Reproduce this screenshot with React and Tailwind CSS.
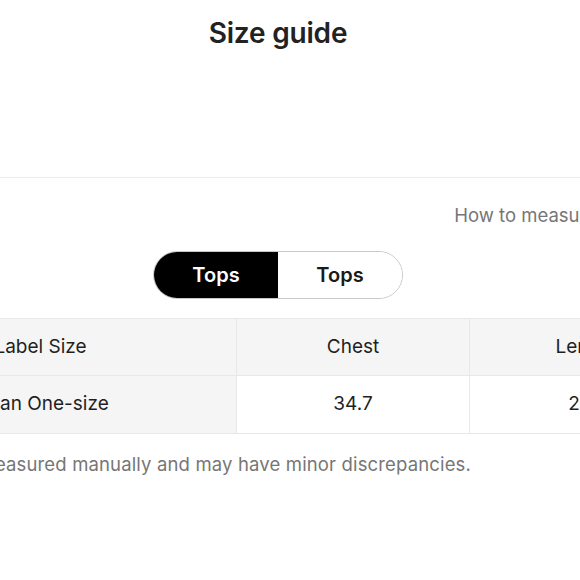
export default function App() {
  const font = { fontFamily: 'Inter, "Noto Sans", sans-serif' };
  return (
    <div className="w-[580px] h-[580px] overflow-hidden bg-white relative" style={font}>
      <div className="w-[1200px] ml-[-322px] flex flex-col">
        <h1 className="pt-[17px] text-center text-[28px] leading-[32px] font-semibold text-[#222] tracking-[-0.2px]">
          Size guide
        </h1>
        <div className="mt-[128px] border-t border-[#ececec]" />
        <div className="mt-[25px] flex justify-end pr-[281px]">
          <span className="text-[18.5px] leading-[24px] text-[#767676]">How to measure</span>
        </div>
        <div className="mt-[24px] flex justify-center">
          <div className="flex w-[250px] h-[48px] rounded-full border border-[#c8c8c8] overflow-hidden">
            <button className="flex-1 bg-black text-white text-[20px] font-semibold flex items-center justify-center">
              Tops
            </button>
            <button className="flex-1 bg-white text-[#1a1a1a] text-[20px] font-semibold flex items-center justify-center">
              Tops
            </button>
          </div>
        </div>
        <div className="mt-[19px] flex pl-[167px]">
          <div className="w-[858px] border-y border-[#e8e8e8] text-[19px] text-[#1f1f1f]">
            <div className="flex h-[57px] bg-[#f5f5f5] border-b border-[#e8e8e8]">
              <div className="w-[392px] flex items-center justify-center border-r border-[#e8e8e8]">Label Size</div>
              <div className="w-[233px] flex items-center justify-center border-r border-[#e8e8e8]">Chest</div>
              <div className="w-[233px] flex items-center justify-center">Length</div>
            </div>
            <div className="flex h-[57px] bg-white">
              <div className="w-[392px] flex items-center justify-center border-r border-[#e8e8e8] bg-[#f5f5f5]">Asian One-size</div>
              <div className="w-[233px] flex items-center justify-center border-r border-[#e8e8e8]">34.7</div>
              <div className="w-[233px] flex items-center justify-center">27.6</div>
            </div>
          </div>
        </div>
        <div className="mt-[18px] pl-[225px]">
          <p className="text-[18.5px] leading-[24px] tracking-[0.15px] text-[#767676]">*Data is measured manually and may have minor discrepancies.</p>
        </div>
      </div>
    </div>
  );
}
